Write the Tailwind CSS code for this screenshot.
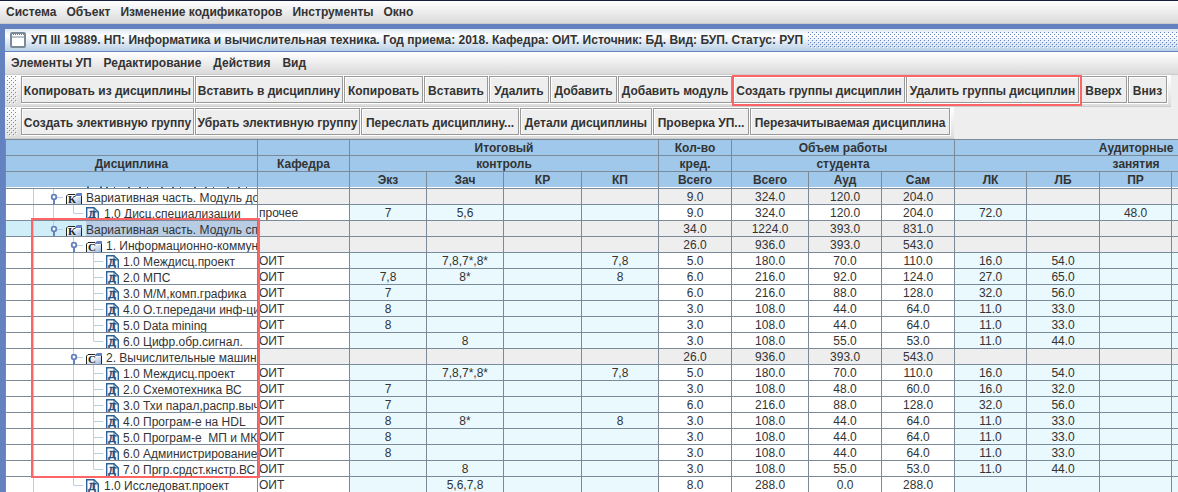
<!DOCTYPE html>
<html lang="ru">
<head>
<meta charset="utf-8">
<title>УП III 19889</title>
<script src="https://cdn.jsdelivr.net/npm/@tailwindcss/browser@4"></script>
</head>
<body class="h-screen overflow-hidden bg-[#6382bf] font-['Liberation_Sans',Arial,sans-serif] text-xs text-[#333333]">
<svg class="absolute h-0 w-0">
  <defs>
    <pattern id="bumpsBlue" width="4" height="4" patternUnits="userSpaceOnUse">
      <rect width="1" height="1" fill="#6382bf"/><rect x="2" y="2" width="1" height="1" fill="#6382bf"/>
      <rect x="1" y="1" width="1" height="1" fill="#fff"/><rect x="3" y="3" width="1" height="1" fill="#fff"/>
    </pattern>
    <pattern id="bumpsGray" width="4" height="4" patternUnits="userSpaceOnUse">
      <rect width="1" height="1" fill="#7a8a99"/><rect x="2" y="2" width="1" height="1" fill="#7a8a99"/>
      <rect x="1" y="1" width="1" height="1" fill="#fff"/><rect x="3" y="3" width="1" height="1" fill="#fff"/>
    </pattern>
    <linearGradient id="folderFill" x1="0" y1="0" x2="1" y2="1"><stop offset=".3" stop-color="#fff"/><stop offset="1" stop-color="#9db8d8"/></linearGradient>
    <g id="folder">
      <path d="M.5 12V4L2 2.500H9.500V4.500H15.500V12Z" fill="url(#folderFill)"/>
      <path d="M.5 12V4L2 2.500H9" fill="none" stroke="#222"/>
      <path d="M15.500 4V12" stroke="#222"/>
      <path d="M9 4H16V1H11L9 3Z" fill="#6382bf"/>
      <path d="M9 4.500H15" stroke="#fff"/>
    </g>
    <g id="leaf">
      <path d="M.7 14V.7H8L12.300 5V14" fill="#fff" stroke="#2a6398" stroke-width="1.400"/>
      <path d="M8 1V5H12" fill="none" stroke="#2a6398"/>
    </g>
  </defs>
</svg>
<div class="flex h-full flex-col">
  <nav class="flex h-6 shrink-0 items-center gap-2.5 border-t border-b border-t-[#16203a] border-b-[#cccccc] bg-linear-to-b from-white to-[#dadada] px-[6px] font-bold" aria-label="Главное меню">
    <button>Система</button><button>Объект</button><button>Изменение кодификаторов</button><button>Инструменты</button><button>Окно</button>
  </nav>
  <main class="mt-[5px] ml-[5px] flex min-h-0 flex-1 flex-col bg-[#eeeeee]">
    <header class="flex h-[23px] shrink-0 items-center border-b border-[#6382bf] bg-linear-to-b from-[#dde8f3] via-white via-30% to-[#b8cfe5] pl-[5px]">
      <svg class="h-4 w-4 shrink-0" viewBox="0 0 16 16"><rect x="1" y="1" width="14" height="14" rx="1" fill="#fff" stroke="#7a8a99" stroke-width="2"/><path d="M2 5H14" stroke="#7a8a99"/><path d="M3 2.500H14" stroke="#6382bf" stroke-dasharray="1 1"/></svg>
      <h1 class="mx-[5px] font-bold whitespace-nowrap">УП III 19889. НП: Информатика и вычислительная техника. Год приема: 2018. Кафедра: ОИТ. Источник: БД. Вид: БУП. Статус: РУП</h1>
      <svg class="h-4 min-w-0 flex-1"><rect width="100%" height="100%" fill="url(#bumpsBlue)"/></svg>
    </header>
    <nav class="flex h-[23px] shrink-0 items-center gap-3 border-b border-[#cccccc] bg-linear-to-b from-white to-[#dadada] px-[6px] font-bold" aria-label="Меню плана">
      <button>Элементы УП</button><button>Редактирование</button><button>Действия</button><button>Вид</button>
    </nav>
    <div id="bar1" class="flex h-8 w-max shrink-0 items-start border-b border-[#cccccc] bg-linear-to-b from-white to-[#dddddd] pt-px pr-[3px] pl-[2px]" role="toolbar"></div>
    <div id="bar2" class="flex h-8 w-max shrink-0 items-start border-b border-[#cccccc] bg-linear-to-b from-white to-[#dddddd] pt-px pr-[3px] pl-[2px]" role="toolbar"></div>
    <section class="relative min-h-0 flex-1 overflow-hidden border-t border-l border-[#7a8a99] bg-white">
      <table class="w-[1312px] table-fixed border-separate border-spacing-0 leading-[14px]">
        <colgroup><col class="w-[252px]"><col class="w-[92px]"><col class="w-[77px]"><col class="w-[77px]"><col class="w-[78px]"><col class="w-[77px]"><col class="w-[73px]"><col class="w-[77px]"><col class="w-[73px]"><col class="w-[73px]"><col class="w-[72px]"><col class="w-[73px]"><col class="w-[72px]"><col class="w-[73px]"><col class="w-[73px]"></colgroup>
        <thead id="head" class="bg-[#9fc8ea]"></thead>
        <tbody id="body"></tbody>
      </table>
      <div class="pointer-events-none absolute top-[78px] left-[25px] h-[260px] w-[229px] border-2 border-[#ff6464]"></div>
    </section>
  </main>
</div>
<script>
const grip = '<svg class="mr-1 h-7 w-[10px] shrink-0"><rect width="100%" height="100%" fill="url(#bumpsGray)"/></svg>';
const btn = ([t, w]) => `<span class="flex ${w} border-r border-b border-white"><button class="h-[27px] flex-1 border border-[#999999] bg-[#eeeeee] pt-[2px] text-center font-bold whitespace-nowrap shadow-[inset_1px_1px_0_#ffffff]">${t}</button></span>`;
document.getElementById('bar1').innerHTML = grip
  + [['Копировать из дисциплины', 'w-[174px]'], ['Вставить в дисциплину', 'w-[149px]'], ['Копировать', 'w-[80px]'], ['Вставить', 'w-[65px]'], ['Удалить', 'w-[61px]'], ['Добавить', 'w-[68px]'], ['Добавить модуль', 'w-[115px]']].map(btn).join('')
  + '<div class="relative flex">' + [['Создать группы дисциплин', 'w-[173px]'], ['Удалить группы дисциплин', 'w-[174px]']].map(btn).join('')
  + '<div class="pointer-events-none absolute -top-px -right-[2px] -bottom-[2px] -left-px border-2 border-[#ff6464]"></div></div>'
  + [['Вверх', 'w-[48px]'], ['Вниз', 'w-[40px]']].map(btn).join('');
document.getElementById('bar2').innerHTML = grip
  + [['Создать элективную группу', 'w-[174px]'], ['Убрать элективную группу', 'w-[166px]'], ['Переслать дисциплину...', 'w-[159px]'], ['Детали дисциплины', 'w-[133px]'], ['Проверка УП...', 'w-[97px]'], ['Перезачитываемая дисциплина', 'w-[201px]']].map(btn).join('');

const th = (t, n = 1) => `<th colspan="${n}" class="h-4 overflow-hidden border-r border-b border-[#7a8a99] p-0 pt-px font-bold whitespace-nowrap">${t}</th>`;
// bottom edge of the row scrolled under the header
const sliver = '<svg class="block h-4 w-full pt-[14px]" aria-hidden="true"><path d="M28 1.500H252" stroke="#fff"/><path d="M81 1.500H83M94 1.500H96" stroke="#2a6398" stroke-width="2"/><path d="M100 1.500H250" stroke="#555" stroke-dasharray="2 6 1 13 2 9"/></svg>';
document.getElementById('head').innerHTML =
  `<tr>${th('')}${th('')}${th('Итоговый', 4)}${th('Кол-во')}${th('Объем работы', 3)}${th('Аудиторные', 5)}</tr>` +
  `<tr>${th('Дисциплина')}${th('Кафедра')}${th('контроль', 4)}${th('кред.')}${th('студента', 3)}${th('занятия', 5)}</tr>` +
  '<tr>' + [sliver, '', 'Экз', 'Зач', 'КР', 'КП', 'Всего', 'Всего', 'Ауд', 'Сам', 'ЛК', 'ЛБ', 'ПР', '', ''].map(t =>
    `<th class="h-[17px] border-r border-b border-[#7a8a99] p-0 font-bold shadow-[inset_0_-1px_0_#ffffff]">${t}</th>`).join('') + '</tr>';

// kind, guide columns running the full row height, elbow ("e" last child, "t" middle child), name, values
const rows = [
  ['K', [28, 48], '', 'Вариативная часть. Модуль доп', '', '', '', '', '', '9.0', '324.0', '120.0', '204.0', '', '', ''],
  ['L2', [28, 48], 'e', '1.0 Дисц.специализации', 'прочее', '7', '5,6', '', '', '9.0', '324.0', '120.0', '204.0', '72.0', '', '48.0'],
  ['KS', [28], '', 'Вариативная часть. Модуль спе', '', '', '', '', '', '34.0', '1224.0', '393.0', '831.0', '', '', ''],
  ['C', [28], '', '1. Информационно-коммун', '', '', '', '', '', '26.0', '936.0', '393.0', '543.0', '', '', ''],
  ['L3', [28, 68], 't', '1.0 Междисц.проект', 'ОИТ', '', '7,8,7*,8*', '', '7,8', '5.0', '180.0', '70.0', '110.0', '16.0', '54.0', ''],
  ['L3', [28, 68], 't', '2.0 МПС', 'ОИТ', '7,8', '8*', '', '8', '6.0', '216.0', '92.0', '124.0', '27.0', '65.0', ''],
  ['L3', [28, 68], 't', '3.0 М/М,комп.графика', 'ОИТ', '7', '', '', '', '6.0', '216.0', '88.0', '128.0', '32.0', '56.0', ''],
  ['L3', [28, 68], 't', '4.0 О.т.передачи инф-ци', 'ОИТ', '8', '', '', '', '3.0', '108.0', '44.0', '64.0', '11.0', '33.0', ''],
  ['L3', [28, 68], 't', '5.0 Data mining', 'ОИТ', '8', '', '', '', '3.0', '108.0', '44.0', '64.0', '11.0', '33.0', ''],
  ['L3', [28, 68], 'e', '6.0 Цифр.обр.сигнал.', 'ОИТ', '', '8', '', '', '3.0', '108.0', '55.0', '53.0', '11.0', '44.0', ''],
  ['C', [28], '', '2. Вычислительные машин', '', '', '', '', '', '26.0', '936.0', '393.0', '543.0', '', '', ''],
  ['L3', [28, 68], 't', '1.0 Междисц.проект', 'ОИТ', '', '7,8,7*,8*', '', '7,8', '5.0', '180.0', '70.0', '110.0', '16.0', '54.0', ''],
  ['L3', [28, 68], 't', '2.0 Схемотехника ВС', 'ОИТ', '7', '', '', '', '3.0', '108.0', '48.0', '60.0', '16.0', '32.0', ''],
  ['L3', [28, 68], 't', '3.0 Тхи парал,распр.выч', 'ОИТ', '7', '', '', '', '6.0', '216.0', '88.0', '128.0', '32.0', '56.0', ''],
  ['L3', [28, 68], 't', '4.0 Програм-е на HDL', 'ОИТ', '8', '8*', '', '8', '3.0', '108.0', '44.0', '64.0', '11.0', '33.0', ''],
  ['L3', [28, 68], 't', '5.0 Програм-е&nbsp; МП и МК', 'ОИТ', '8', '', '', '', '3.0', '108.0', '44.0', '64.0', '11.0', '33.0', ''],
  ['L3', [28, 68], 't', '6.0 Администрирование', 'ОИТ', '8', '', '', '', '3.0', '108.0', '44.0', '64.0', '11.0', '33.0', ''],
  ['L3', [28, 68], 'e', '7.0 Пргр.срдст.кнстр.ВС', 'ОИТ', '', '8', '', '', '3.0', '108.0', '55.0', '53.0', '11.0', '44.0', ''],
  ['L2', [28], 'e', '1.0 Исследоват.проект', 'ОИТ', '', '5,6,7,8', '', '', '8.0', '288.0', '0.0', '288.0', '', '', ''],
];

function tree(kind, guides, elbow, text) {
  const leaf = kind[0] === 'L', sel = kind === 'KS';
  const x = kind[0] === 'K' ? 48 : kind === 'C' || kind === 'L2' ? 68 : 88;
  let g = guides.map(v => `<path d="M${v - .5} 0V15"/>`).join('');
  if (leaf) g += `<path d="M${x - .5} 0V${elbow === 'e' ? 8.5 : 15}M${x} 8.5H${x + 9}"/>`;
  else g += `<path d="M${x - .5} 0V6M${x + 3} 8.5H${x + 9}"/>`;
  const knob = leaf ? '' : `<path d="M${x} 10V15" stroke="#6382bf" stroke-width="2"/><circle cx="${x}" cy="8" r="2.300" fill="#fff" stroke="#6382bf" stroke-width="1.800"/>`;
  const letter = leaf ? 'Д' : kind === 'C' ? 'С' : 'К';
  const w = kind === 'L3' ? 117 : leaf ? 98 : x + 32;
  const svg = `<svg class="h-[15px] shrink-0" width="${w}" height="15"><g fill="none" stroke="#b8cfe5">${g}</g>${knob}<use href="${leaf ? '#leaf' : '#folder'}" x="${x + 12}" y="${leaf ? 2 : 3}"/><text x="${x + 18}" y="${leaf ? 13 : 14}" text-anchor="middle" class="font-['Liberation_Serif',serif] text-[11px] font-bold ${leaf ? 'fill-[#1f4f80] stroke-[#1f4f80] [stroke-width:0.6px]' : 'fill-[#222222]'}">${letter}</text></svg>`;
  return `<div class="flex h-[15px] overflow-hidden ${sel ? 'bg-[#d0eef7]' : ''}">${svg}<span class="min-w-0 flex-1 overflow-hidden pt-[2px] whitespace-nowrap ${sel ? 'bg-[#b8cce4]' : ''}">${text}</span></div>`;
}

document.getElementById('body').innerHTML = rows.map(([kind, guides, elbow, name, ...v]) => {
  const group = kind[0] !== 'L';
  const cells = [...v, '', ''].map((t, i) => {
    const bg = group ? 'bg-[#eeeeee]' : (i === 0 || (i > 4 && i < 9)) ? 'bg-white' : 'bg-[#e9f9fd]';
    return `<td class="h-4 border-r border-b border-[#7a8a99] p-0 pt-px ${i === 0 ? 'pl-px text-left' : 'text-center'} ${bg}">${t}</td>`;
  }).join('');
  return `<tr><td class="h-4 overflow-hidden border-r border-b border-[#7a8a99] p-0">${tree(kind, guides, elbow, name)}</td>${cells}</tr>`;
}).join('');
</script>
</body>
</html>
